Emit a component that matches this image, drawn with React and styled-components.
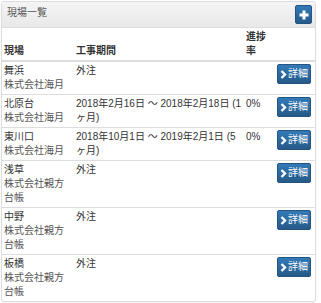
import React from "react";
import styled, { createGlobalStyle } from "styled-components";

const Global = createGlobalStyle`
  html, body { margin: 0; padding: 0; background: #fff; }
  body {
    font-family: "Liberation Sans", "Noto Sans CJK JP", sans-serif;
    font-size: 10px;
    line-height: 14px;
    color: #333;
  }
  * { box-sizing: border-box; }
`;

const Wrap = styled.div`
  padding: 1px;
`;

const Panel = styled.div`
  width: 315px;
  border: 1px solid #ddd;
  border-radius: 3px;
  background: #fff;
  box-shadow: 0 1px 2px rgba(0, 0, 0, 0.05);
  overflow: hidden;
`;

const Heading = styled.div`
  display: flex;
  align-items: center;
  justify-content: space-between;
  height: 26px;
  padding: 0 3px 0 5px;
  background: linear-gradient(to bottom, #f5f5f5 0%, #e8e8e8 100%);
  border-bottom: 1px solid #ddd;
`;

const Title = styled.span`
  color: #555;
  font-size: 10px;
  margin-top: -3px;
`;

const PrimaryButton = styled.button`
  display: inline-flex;
  align-items: center;
  justify-content: center;
  gap: 1px;
  width: ${(p) => p.$w}px;
  height: ${(p) => p.$h}px;
  padding: 0;
  margin: 0;
  border: 1px solid #245580;
  border-radius: 2px;
  background: linear-gradient(to bottom, #337ab7 0%, #265a88 100%);
  color: #fff;
  font-family: "Liberation Sans", "Noto Sans CJK JP", sans-serif;
  font-size: 10px;
  line-height: 14px;
  cursor: pointer;
`;

const Table = styled.table`
  width: 100%;
  table-layout: fixed;
  border-collapse: collapse;
`;

const Th = styled.th`
  width: ${(p) => p.$w}px;
  padding: 2px;
  text-align: left;
  vertical-align: bottom;
  font-weight: bold;
  color: #333;
  border-bottom: 2px solid #ddd;
`;

const Td = styled.td`
  padding: 2px;
  vertical-align: top;
  border-top: ${(p) => (p.$first ? "0" : "1px solid #ddd")};
  color: #333;
`;

const Line = styled.div`
  color: ${(p) => p.$muted ? "#555" : "#333"};
`;

const Chevron = () => (
  <svg width="7" height="9" viewBox="0 0 7 9">
    <polyline points="1.5,1 5,4.5 1.5,8" fill="none" stroke="#fff" strokeWidth="2.4" />
  </svg>
);

const Plus = () => (
  <svg width="10" height="10" viewBox="0 0 10 10">
    <rect x="3.5" y="0.5" width="3" height="9" fill="#fff" />
    <rect x="0.5" y="3.5" width="9" height="3" fill="#fff" />
  </svg>
);

const rows = [
  { site: "舞浜", company: ["株式会社海月"], period: "外注", progress: "" },
  { site: "北原台", company: ["株式会社海月"], period: "2018年2月16日 ～ 2018年2月18日 (1ヶ月)", progress: "0%" },
  { site: "東川口", company: ["株式会社海月"], period: "2018年10月1日 ～ 2019年2月1日 (5ヶ月)", progress: "0%" },
  { site: "浅草", company: ["株式会社親方台帳"], period: "外注", progress: "" },
  { site: "中野", company: ["株式会社親方台帳"], period: "外注", progress: "" },
  { site: "板橋", company: ["株式会社親方台帳"], period: "外注", progress: "" },
];

export default function App() {
  return (
    <Wrap>
      <Global />
      <Panel>
        <Heading>
          <Title>現場一覧</Title>
          <PrimaryButton $w={17} $h={19}>
            <Plus />
          </PrimaryButton>
        </Heading>
        <Table>
          <thead>
            <tr>
              <Th $w={72}>現場</Th>
              <Th $w={170}>工事期間</Th>
              <Th $w={31}>進捗率</Th>
              <Th $w={40}></Th>
            </tr>
          </thead>
          <tbody>
            {rows.map((r, i) => (
              <tr key={i}>
                <Td $first={i === 0}>
                  <Line>{r.site}</Line>
                  <Line $muted>{r.company}</Line>
                </Td>
                <Td $first={i === 0}>
                  <Line>{r.period}</Line>
                </Td>
                <Td $first={i === 0}>{r.progress}</Td>
                <Td $first={i === 0}>
                  <PrimaryButton $w={34} $h={20}>
                    <Chevron />
                    詳細
                  </PrimaryButton>
                </Td>
              </tr>
            ))}
          </tbody>
        </Table>
      </Panel>
    </Wrap>
  );
}
